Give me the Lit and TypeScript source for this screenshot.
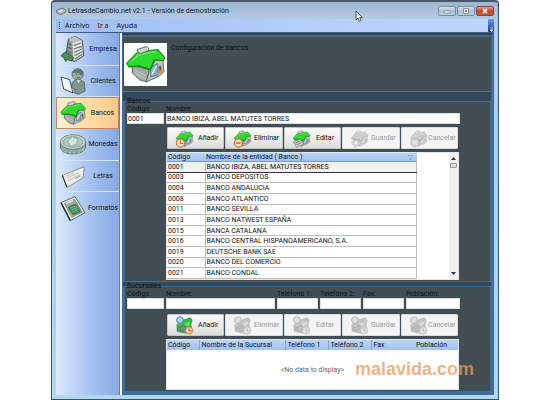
import { LitElement, html, svg, css, nothing } from "lit";
import { customElement, property, state } from "lit/decorators.js";
import { classMap } from "lit/directives/class-map.js";

const houseShape = svg`
  <path d="M8 22 L25 26 L22 38 L15 36 L8 29Z" fill="#a3a7a5" stroke="#4d5452" stroke-width=".8"/>
  <path d="M25 25 L31 16 L38 17 L39 28 L35 32 L22 38Z" fill="#bfc3c1" stroke="#4d5452" stroke-width=".8"/>
  <path d="M10 26 l11 6 M10 29 l11 6" stroke="#c9cccb" stroke-width="1"/>
  <path d="M26 24 L33 20 L33 31 L26 33Z" fill="#7fb4d6" stroke="#5a6670" stroke-width=".8"/>
  <path d="M27 31 L32 22" stroke="#e8f4ff" stroke-width="1.400"/>
  <path d="M34 23 l2 -1 l1 6 l-2 2z" fill="#6e5a4a"/>
  <path d="M32 28 l5 -2 l1 2 l-5 3z" fill="#c09368"/>
  <path d="M2.500 20 L12 10 L21 7.500 L33 6.500 L40 14.500 L38.500 17 L30 16.500 L25.500 26 L15 22.500 L5 23.500Z" fill="#30d930" stroke="#1b8220" stroke-width="1"/>
  <path d="M30 16.500 L25.500 26 L15 22.500 L4 23" fill="none" stroke="#17901c" stroke-width="1.600"/>
  <path d="M7 18.500 L14 11.500 L31 8.500" fill="none" stroke="#74ee74" stroke-width="1.200"/>
  <path d="M13 8 Q12 6 14 6 L22 3.500 Q25 4.500 24 7.500 L16 10.500Z" fill="#cfd2d2" stroke="#565c5c" stroke-width=".9"/>`;

const icons: Record<string, unknown> = {
  bancos: houseShape,
  empresa: svg`
    <path d="M14 6 L24 2 L35 8 L37 31 L23 40 L10 33Z" fill="#8f9894" stroke="#333b38" stroke-width="1.2"/>
    <path d="M20 12 L34 8 L36 31 L22 39Z" fill="#dfe4e2"/>
    <path d="M14 6 L24 2 L34 8 L20 12Z" fill="#b9c2be"/>
    <path d="M22 16 l11 -4 M22 21 l12 -4 M23 26 l11 -5 M23 31 l12 -6 M24 36 l11 -7" stroke="#6f7b77" stroke-width="1.8"/>
    <path d="M13 12 l5 3 M13 18 l6 3 M12 24 l7 3" stroke="#5d6864" stroke-width="2"/>
    <path d="M3 31 L9 25 L17 30 L22 34 L19 39 L12 37 L10 40 L7 34Z" fill="#4f8a55" stroke="#24452a" stroke-width="1"/>`,
  clientes: svg`
    <path d="M20 23 Q28 15 38 23 L39 36 L30 41 L18 37Z" fill="#7e9690" stroke="#3a4b48" stroke-width="1"/>
    <circle cx="28" cy="11" r="8.500" fill="#99aaa3" stroke="#3f4d49"/>
    <path d="M20 9 Q24 0 34 5 Q38 10 35 13 Q30 7 20 9Z" fill="#62736e"/>
    <path d="M25 11 h2 M31 11 h2 M27 16 q2 1 4 0" stroke="#323d3a"/>
    <path d="M26 20 l3 6 l4 -6" fill="#e5ebea" stroke="#61716d"/>
    <path d="M3 15 L16 19 L21 39 L7 33Z" fill="#f5f7fb" stroke="#27313c" stroke-width="1.300"/>
    <path d="M18 31 l7 3 l-3 4" fill="#bdc7c2" stroke="#3f4d49"/>`,
  monedas: svg`
    <path d="M2 19 V27 Q5 36 21 36 Q38 35 40 26 V18Z" fill="#8fa79d" stroke="#485e57"/>
    <ellipse cx="21" cy="18" rx="19" ry="11" fill="#c5d5cf" stroke="#4e665e"/>
    <ellipse cx="21" cy="18" rx="15" ry="8" fill="#b1c8be" stroke="#7d968d"/>
    <path d="M13 17 L20 10 L28 14 L26 22 L17 24Z" fill="#d5e3dd" stroke="#7f9d91"/>
    <path d="M5 28 v4 M10 31 v4 M16 33 v3 M23 33 v3 M30 32 v3 M36 28 v4" stroke="#d6e3de"/>`,
  letras: svg`
    <path d="M5 20 L38 7 L36 24 L12 38Z" fill="#efefea" stroke="#60666c" stroke-width="1"/>
    <path d="M5 20 L12 38" stroke="#222" stroke-width="1.600"/>
    <path d="M11 21 L23 16 M12 24 L30 16 M13 28 L32 19" stroke="#a5a59f"/>
    <path d="M24 25 l8 -4" stroke="#6d7680"/>`,
  formatos: svg`
    <path d="M3 13 L24 4 L39 28 L17 40Z" fill="#f4f6f5" stroke="#3d4743" stroke-width="1.200"/>
    <path d="M3 13 L17 40" stroke="#202624" stroke-width="2"/>
    <path d="M8 14 L23 8 L35 27 L19 35Z" fill="#9eada7" stroke="#5c6964"/>
    <path d="M14 20 L25 15 L32 26 L21 31Z" fill="#3f9450" stroke="#22592e"/>
    <path d="M17 21 l8 -3 M19 24 l8 -4 M21 27 l8 -4" stroke="#a7d7ae"/>
    <path d="M11 14 l10 -4" stroke="#edf1ef" stroke-width="2"/>`,
};

const badges: Record<string, unknown> = {
  anadir: svg`<circle cx="12" cy="31" r="9" fill="#f3e2c8" stroke="#d8722c" stroke-width="2.500"/><path d="M12 25 v7 h6" fill="none" stroke="#c24c22" stroke-width="2"/>`,
  eliminar: svg`<circle cx="12" cy="31" r="9" fill="#f3e2c8" stroke="#d8722c" stroke-width="2.500"/><path d="M7 31 h10" stroke="#c2321c" stroke-width="2.500"/>`,
  editar: svg`<path d="M3 28 L19 22 L26 34 L10 41Z" fill="#c4c8c6" stroke="#555c5a"/><path d="M8 31 l10 -5 M10 35 l11 -5" stroke="#666d6b" stroke-width="1.500"/>`,
  guardar: svg`<path d="M3 29 L16 24 L23 34 L10 40Z" fill="#b9bcbb" stroke="#666"/><path d="M9 29 l6 -2 l2 4 l-6 2z" fill="#eee"/>`,
  cancelar: svg`<circle cx="13" cy="30" r="9" fill="#bdbdbd" stroke="#777" stroke-width="2"/><path d="M9 26 l8 8 M17 26 l-8 8" stroke="#eee" stroke-width="2"/>`,
};

const houseIcon = (name: string, cls: string) =>
  html`<svg class=${cls} viewBox="0 0 42 42" aria-hidden="true">${icons[name]}</svg>`;

const actionIcon = (name: string, branch: boolean) => html`
  <svg class="action-icon" viewBox="0 0 42 42" aria-hidden="true">
    ${branch
      ? svg`
        <path d="M4 20 L15 10 L34 4 L38 9 L35 20 L38 28 L24 38 L5 34Z" fill="#30bd45" stroke="#205c2b"/>
        <path d="M5 28 l13 -7 l10 4 l-10 10z" fill="#7d8783" stroke="#4d5452"/>
        <path d="M20 16 l13 -4 l1 7 l-9 5z" fill="#5ae06a"/>
        <circle cx="11" cy="9" r="7.500" fill="#a8cdf2" stroke="#3f78bd" stroke-width="2"/>
        <path d="M7 7 q4 -4 7 0" stroke="#f2f9ff" fill="none" stroke-width="1.500"/>
        <circle cx="31" cy="32" r="8" fill="#f2d2ac" stroke="#d4752f" stroke-width="2"/>
        <path d="M31 27 v6 h5" fill="none" stroke="#c2502b" stroke-width="2"/>`
      : svg`${houseShape}${badges[name]}`}
  </svg>`;

@customElement("action-button")
class ActionButton extends LitElement {
  @property() name = "";
  @property() label = "";
  @property({ type: Boolean }) branch = false;
  @property({ type: Boolean }) disabled = false;

  static styles = css`
    :host { display: block; }
    button {
      display: flex; align-items: center;
      box-sizing: border-box; width: 100%; height: 22px; margin: 0; padding: 0 1px 0 7px;
      font: 7px/8px Roboto, Arial, sans-serif; color: #111;
      background: linear-gradient(#fbfbfb, #ececec 50%, #dcdcdc);
      border: 1px solid #c4c4c4; border-radius: 1px;
    }
    button:disabled { color: #999; background: #f4f4f4; border-color: #d9dcdc; }
    .action-icon { width: 19px; height: 19px; flex: none; }
    button:disabled .action-icon { filter: grayscale(1); opacity: 0.5; }
    .caption { flex: 1; text-align: center; }
  `;

  render() {
    return html`<button type="button" ?disabled=${this.disabled}>
      ${actionIcon(this.name, this.branch)}<span class="caption">${this.label}</span>
    </button>`;
  }
}

const sections = [
  ["empresa", "Empresa"],
  ["clientes", "Clientes"],
  ["bancos", "Bancos"],
  ["monedas", "Monedas"],
  ["letras", "Letras"],
  ["formatos", "Formatos"],
];

const actions = [
  ["anadir", "Añadir"],
  ["eliminar", "Eliminar"],
  ["editar", "Editar"],
  ["guardar", "Guardar"],
  ["cancelar", "Cancelar"],
];

const banks = [
  ["0001", "BANCO IBIZA, ABEL MATUTES TORRES"],
  ["0003", "BANCO DEPOSITOS"],
  ["0004", "BANCO ANDALUCIA"],
  ["0008", "BANCO ATLANTICO"],
  ["0011", "BANCO SEVILLA"],
  ["0013", "BANCO NATWEST ESPAÑA"],
  ["0015", "BANCA CATALANA"],
  ["0016", "BANCO CENTRAL HISPANOAMERICANO, S.A."],
  ["0019", "DEUTSCHE BANK SAE"],
  ["0020", "BANCO DEL COMERCIO"],
  ["0021", "BANCO CONDAL"],
];

const branchFields = ["Código", "Nombre:", "Teléfono 1:", "Teléfono 2:", "Fax:", "Población:"];
const branchColumns = ["Código", "Nombre de la Sucursal", "Teléfono 1", "Teléfono 2", "Fax", "Población"];

@customElement("app-root")
class AppRoot extends LitElement {
  @state() private section = "bancos";
  @state() private selected = 0;

  static styles = css`
    :host {
      display: block; min-height: 100vh; background: #fff; color: #0c1218;
      font: 7px/8px Roboto, Arial, sans-serif;
    }
    * { box-sizing: border-box; }
    button, input { font: inherit; color: inherit; margin: 0; }

    .window {
      position: relative; display: flex; flex-direction: column;
      margin: 0 51px; padding: 0 4px 4px;
      background: linear-gradient(#9db6d0, #b4cbe4 18px, #a9d0ee 60%, #b5d7ee);
      border: 1px solid #2f5668; border-top: 2px solid #465767; border-radius: 4px 4px 0 0;
    }
    .titlebar { display: flex; align-items: center; gap: 2px; height: 17px; color: #101820; }
    .app-icon { width: 10px; height: 8px; }
    .title { flex: 1; margin: 0; font: 7px/10px Roboto, sans-serif; white-space: nowrap; }
    .controls { display: flex; gap: 1px; }
    .control {
      display: grid; place-items: center; width: 18px; height: 10px; padding: 0;
      border: 1px solid #7b8da1; border-radius: 2px;
      background: linear-gradient(#d3dfec, #afc0d4 50%, #b9cce0);
    }
    .control.close { background: linear-gradient(#dc9a8d, #c4452f 50%, #cb5c43); border-color: #84443f; }
    .control svg { width: 8px; height: 6px; display: block; }

    .menubar {
      display: flex; align-items: stretch; height: 13px; padding-left: 3px;
      background: linear-gradient(90deg, #9dbdf5, #b7cffa 60%, #bed5fa);
    }
    .grip { width: 1px; margin: 3px 5px 3px 0; border-left: 1px dotted #33589b; }
    .menu-item {
      padding: 0; margin-right: 8px; border: 0; background: none; color: #101820;
      font: 7px/13px "Noto Sans", sans-serif;
    }
    .spacer { flex: 1; }
    .overflow {
      width: 6px; padding: 0; border: 0; border-radius: 1px; color: #fff;
      background: linear-gradient(#6f9be4, #14388c); display: flex; align-items: end; justify-content: center;
    }
    .overflow svg { width: 5px; height: 5px; }

    .body { flex: 1; display: flex; gap: 2px; background: #eef5fc; border-top: 1px solid #3e5f84; }
    .sidebar {
      width: 64px; padding-top: 1px; flex: none; border-right: 1px solid #6a7da6;
      background: linear-gradient(90deg, #dce9fb, #a9c5f1 50%, #84a9e2);
    }
    .sections { display: grid; grid-template-rows: repeat(6, 1fr); height: 190px; }
    .section {
      display: flex; align-items: center; padding: 0 0 0 3px;
      border: 0; border-bottom: 1px solid #d5e3f8; background: none; min-height: 0;
    }
    .section:last-child { border-bottom: 0; }
    .section span { flex: 1; text-align: center; }
    .section.active {
      background: linear-gradient(90deg, #fff0d2, #fdd9a2 60%, #fbc987);
      border: 1px solid #c2866c; padding: 0 0 0 2px;
    }
    .section-icon { width: 28px; height: 28px; flex: none; }

    .main {
      flex: 1; min-width: 0; background: #36475a; border: solid #3c6d9f;
      border-width: 2px 3px 3px 1px; border-top-color: #2c4564;
    }
    .header {
      display: flex; align-items: start; gap: 4px; height: 57px; padding: 6px 0 0 1px;
      background: #434e54; border-top: 2px solid #4d6579; border-bottom: 1px solid #4e7390;
    }
    .header-icon { width: 43px; height: 43px; background: #fff; flex: none; }
    .heading { margin: 1px 0 0; font: inherit; }

    .group {
      margin: 0; min-width: 0; padding: 0 30px 1px 2px; background: #434e54;
      border: 1px solid #3f6d94; border-left-width: 2px;
    }
    .group.banks { margin-top: 5px; }
    legend { padding: 0; margin-left: 0; line-height: 8px; }
    .fields { display: grid; column-gap: 2px; }
    .banks .fields { grid-template-columns: 37px minmax(0, 1fr); }
    .branches .fields { grid-template-columns: 37px minmax(0, 1fr) 41px 41px 41px 54px; }
    .field { display: flex; flex-direction: column; white-space: nowrap; }
    .field input {
      width: 100%; height: 11px; padding: 0; border: 1px solid #d8dee2;
      background: #fff; color: #111; outline: 0; border-radius: 0;
    }
    .actions { display: flex; gap: 1px; margin: 3px 2px 3px 40px; }
    .actions > * { flex: 1; min-width: 0; }
    .branches .actions { margin-top: 5px; }
    .grid { margin: 0 1px 0 39px; background: #fff; color: #111; border: 1px solid #dfe6ee; }
    .bank-grid { display: flex; }
    table { border-collapse: collapse; table-layout: fixed; width: 100%; }
    th, td { padding: 0 1px; text-align: left; font-weight: normal; white-space: nowrap; overflow: hidden; }
    th { background: linear-gradient(#bcd4f7, #a3c2ef); }
    .bank-table { flex: 1; height: 126px; }
    .bank-table th { border: solid #7e9ac0; border-width: 0 0 1px; }
    .bank-table td { border: 1px solid #bcbcbc; border-left: 0; }
    .bank-table tr.selected td { background: #f1f1f1; border-top-color: #333; border-bottom-color: #333; }
    .code-col { width: 38px; }
    .heading-cell { display: flex; justify-content: space-between; align-items: center; }
    .filter { width: 5px; height: 5px; margin-right: 3px; }
    .blank { width: 32px; }
    .scrollbar {
      width: 9px; display: flex; flex-direction: column; align-items: center;
      padding: 3px 0; background: #f0f0f0;
    }
    .arrow { width: 5px; height: 4px; }
    .thumb { width: 7px; height: 5px; margin-top: 3px; background: #dedede; border: 1px solid #999; border-radius: 1px; }
    .branch-table th { height: 10px; border-right: 1px solid #86a3cb; padding-left: 2px; }
    .branch-table th:first-child { padding-left: 1px; }
    .branch-table th:last-child { border-right: 0; text-align: center; }
    .branch-table th:nth-child(5) { border-right: 0; }
    .branch-table td { height: 39px; text-align: center; color: #666; }
    .c-code { width: 32px; } .c-phone { width: 43px; } .c-fax { width: 33px; } .c-town { width: 54px; }

    .pointer { position: absolute; left: 303px; top: 8px; width: 8px; height: 12px; }
    .watermark {
      position: absolute; right: 24px; bottom: 20px; color: rgba(232, 153, 93, 0.75);
      font: bold 18px/20px "Liberation Sans", Arial, sans-serif;
    }
  `;

  private field(label: string, id: string, value = "") {
    return html`<div class="field"><label for=${id}>${label}</label><input id=${id} type="text" .value=${value} /></div>`;
  }

  private toolbar(branch: boolean) {
    const enabled = branch ? 1 : 3;
    return html`<div class="actions">${actions.map(
      ([name, label], i) => html`<action-button name=${name} label=${label} ?branch=${branch} ?disabled=${i >= enabled}></action-button>`
    )}</div>`;
  }

  render() {
    const bank = banks[this.selected];
    return html`
      <div class="window">
        <header class="titlebar">
          <svg class="app-icon" viewBox="0 0 20 16" aria-hidden="true">
            <path d="M1 7 L12 2 L19 6 L18 11 L8 15 L1 11Z" fill="#c7cccf" stroke="#4c5962" stroke-width="1.500"/>
            <path d="M3 8 L12 4 L16 7 L8 11Z" fill="#fff" stroke="#7b8790"/>
          </svg>
          <h1 class="title">LetrasdeCambio.net v2.1 - Versión de demostración</h1>
          <div class="controls">
            <button class="control" type="button" aria-label="Minimizar"><svg viewBox="0 0 8 6"><rect x="1" y="3" width="6" height="2" rx=".5" fill="#fff" stroke="#5a6878" stroke-width=".6"/></svg></button>
            <button class="control" type="button" aria-label="Maximizar"><svg viewBox="0 0 8 6"><rect x="1.500" y=".5" width="5" height="5" rx=".5" fill="#fff" stroke="#5a6878" stroke-width=".7"/><rect x="3" y="2.200" width="2" height="1.600" fill="#5a6878"/></svg></button>
            <button class="control close" type="button" aria-label="Cerrar"><svg viewBox="0 0 8 6"><path d="M2 1 L6 5 M6 1 L2 5" stroke="#fff" stroke-width="1.600"/></svg></button>
          </div>
        </header>
        <nav class="menubar">
          <span class="grip"></span>
          ${["Archivo", "Ir a", "Ayuda"].map((m) => html`<button class="menu-item" type="button">${m}</button>`)}
          <span class="spacer"></span>
          <button class="overflow" type="button" aria-label="Opciones"><svg viewBox="0 0 5 5"><path d="M1 1 h3 M1 3 h3 l-1.500 1.500z" stroke="#fff" stroke-width=".7" fill="#fff"/></svg></button>
        </nav>
        <div class="body">
          <aside class="sidebar">
            <nav class="sections">
              ${sections.map(([id, label]) => html`
                <button type="button" class=${classMap({ section: true, active: id === this.section })}
                  @click=${() => (this.section = id)}>
                  ${houseIcon(id, "section-icon")}<span>${label}</span>
                </button>`)}
            </nav>
          </aside>
          <main class="main">
            <section class="header">
              ${houseIcon("bancos", "header-icon")}
              <h2 class="heading">Configuración de bancos</h2>
            </section>
            <fieldset class="group banks">
              <legend>Bancos</legend>
              <div class="fields">
                ${this.field("Código", "bank-code", bank[0])}
                ${this.field("Nombre:", "bank-name", bank[1])}
              </div>
              ${this.toolbar(false)}
              <div class="grid bank-grid">
                <table class="bank-table">
                  <colgroup><col class="code-col" /><col /></colgroup>
                  <thead><tr>
                    <th scope="col">Código</th>
                    <th scope="col"><div class="heading-cell">Nombre de la entidad ( Banco )
                      <svg class="filter" viewBox="0 0 5 5"><path d="M.5 .5 h4 l-1.500 2 v2 h-1 v-2z" fill="#d9e7fb" stroke="#6d86ab" stroke-width=".6"/></svg></div></th>
                  </tr></thead>
                  <tbody>
                    ${banks.map((row, i) => html`
                      <tr class=${i === this.selected ? "selected" : nothing} @click=${() => (this.selected = i)}>
                        ${row.map((c) => html`<td>${c}</td>`)}
                      </tr>`)}
                  </tbody>
                </table>
                <div class="blank"></div>
                <div class="scrollbar" aria-hidden="true">
                  <svg class="arrow" viewBox="0 0 5 4"><path d="M0 4 L2.500 1 L5 4Z" fill="#333"/></svg>
                  <span class="thumb"></span>
                  <span class="spacer"></span>
                  <svg class="arrow" viewBox="0 0 5 4"><path d="M0 0 L2.500 3 L5 0Z" fill="#333"/></svg>
                </div>
              </div>
            </fieldset>
            <fieldset class="group branches">
              <legend>Sucursales</legend>
              <div class="fields">${branchFields.map((f, i) => this.field(f, `branch-${i}`))}</div>
              ${this.toolbar(true)}
              <div class="grid">
                <table class="branch-table">
                  <colgroup><col class="c-code" /><col /><col class="c-phone" /><col class="c-phone" /><col class="c-fax" /><col class="c-town" /></colgroup>
                  <thead><tr>${branchColumns.map((c) => html`<th scope="col">${c}</th>`)}</tr></thead>
                  <tbody><tr><td colspan="6">&lt;No data to display&gt;</td></tr></tbody>
                </table>
              </div>
            </fieldset>
          </main>
        </div>
        <svg class="pointer" viewBox="0 0 8 12" aria-hidden="true"><path d="M1 1 V10 L3 8 L4.500 11.300 L6 10.600 L4.700 7.500 H7.400Z" fill="#fff" stroke="#28323c" stroke-width=".8"/></svg>
        <div class="watermark">malavida.com</div>
      </div>`;
  }
}
